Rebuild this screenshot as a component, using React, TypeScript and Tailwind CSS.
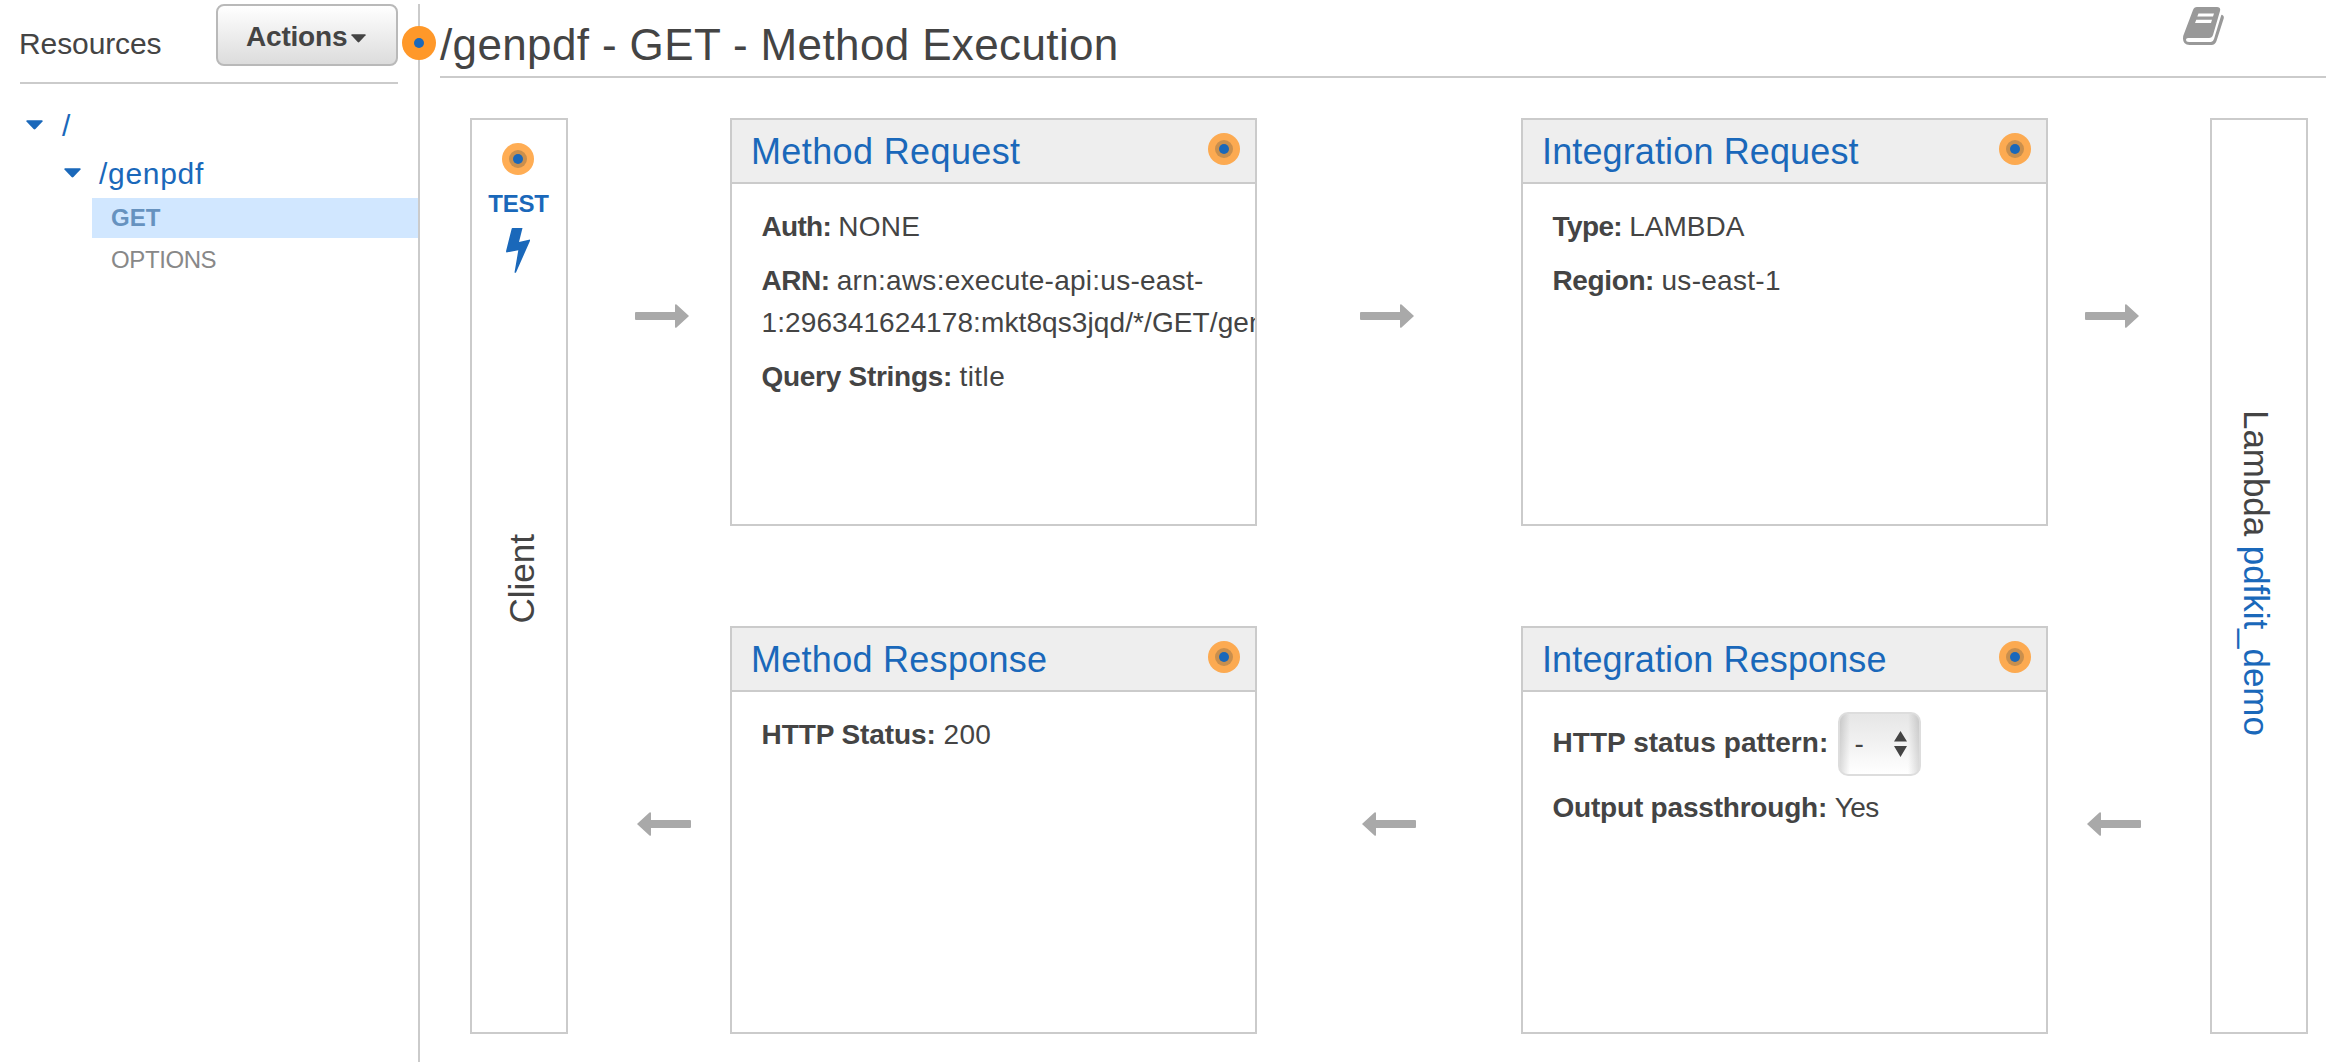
import React from "react";

function Dot({ className = "" }: { className?: string }) {
  return (
    <svg className={`size-8 shrink-0 ${className}`} viewBox="0 0 32 32">
      <circle cx="16" cy="16" r="16" fill="#ff9829" fillOpacity="0.8" />
      <circle cx="16" cy="16" r="9" fill="#c98f4d" />
      <circle cx="16" cy="16" r="5" fill="#1a68ba" />
    </svg>
  );
}

function Arrow({ left = false, className = "" }: { left?: boolean; className?: string }) {
  return (
    <div className={`pt-[186px] ${className}`}>
      <svg className={`h-6 w-[54px] ${left ? "rotate-180" : ""}`} viewBox="0 0 54 24">
        <path d="M1 8H40V1Q40.300 -0.300 41.500 0.400L53.500 11.400Q54.200 12 53.500 12.600L41.500 23.600Q40.300 24.300 40 23V16H1Q0 16 0 15V9Q0 8 1 8Z" fill="#a9a9a9" />
      </svg>
    </div>
  );
}

function Caret({ className = "" }: { className?: string }) {
  return (
    <svg className={`shrink-0 ${className}`} viewBox="0 0 18 10">
      <path d="M1 0H17Q18 0.300 17.500 1.200L10 9.300Q9 10.200 8 9.300L0.500 1.200Q0 0.300 1 0Z" fill="currentColor" />
    </svg>
  );
}

function Card({ title, titleClass, children }: { title: string; titleClass: string; children: React.ReactNode }) {
  return (
    <section className="h-[408px] w-[527px] overflow-hidden border-2 border-[#cbcbcb]">
      <header className="flex h-16 items-start justify-between border-b-2 border-[#cbcbcb] bg-[#eeeeee] pr-[15px] pl-[19px]">
        <h2 className={`text-[36px] leading-[63px] text-[#1a68ba] ${titleClass}`}>{title}</h2>
        <Dot className="mt-[13px]" />
      </header>
      <div className="flex flex-col gap-3 pt-[22px] pl-[29.500px] text-[28px] leading-[42px]">{children}</div>
    </section>
  );
}

export default function App() {
  return (
    <div className="flex h-[1062px] w-[2326px] overflow-hidden bg-white font-['Liberation_Sans',Arial,sans-serif] text-[#444444]">
      <aside className="relative mt-1 w-[420px] shrink-0 border-r-2 border-[#cbcbcb]">
        <div className="ml-5 flex h-20 w-[378px] items-start justify-between border-b-2 border-[#cbcbcb]">
          <h2 className="-ml-px pt-[20px] text-[30px] leading-[40px] tracking-[-0.1px]">Resources</h2>
          <button className="flex h-[62px] w-[182px] items-start rounded-lg border-2 border-[#b9b9b9] bg-linear-to-b from-white to-[#dcdcdc] pl-7 text-[28px] font-bold">
            <span className="leading-[62px] tracking-[-0.2px]">Actions</span>
            <Caret className="mt-[28px] ml-[4px] h-[9px] w-[15px]" />
          </button>
        </div>
        <nav>
          <div className="mt-[21px] flex h-[40px] items-center pl-[26px] text-[30px] leading-[40px] text-[#1a68ba]">
            <Caret className="h-[10px] w-[17px]" />
            <span className="ml-[19px] pt-[2px]">/</span>
          </div>
          <div className="mt-2 flex h-[40px] items-center pl-[64px] text-[30px] leading-[40px] text-[#1a68ba]">
            <Caret className="h-[10px] w-[17px]" />
            <span className="ml-[18px] pt-[2px] tracking-[0.7px]">/genpdf</span>
          </div>
          <div className="mt-[5px] ml-[92px] h-10 bg-[#d1e7ff] pl-[19px] text-[24px] leading-[39px] font-bold text-[#6692bf]">GET</div>
          <div className="ml-[92px] h-10 pl-[19px] text-[24px] leading-[43px] tracking-[-0.4px] text-[#888888]">OPTIONS</div>
        </nav>
        <svg className="absolute top-[22px] -right-[18px] size-[34px]" viewBox="0 0 34 34">
          <circle cx="17" cy="17" r="17" fill="#ff9829" />
          <circle cx="17" cy="17" r="5" fill="#1a68ba" />
        </svg>
      </aside>

      <main className="ml-5 flex flex-1 flex-col">
        <div className="flex h-[78px] justify-between border-b-2 border-[#cbcbcb]">
          <h1 className="pt-[20px] text-[44px] leading-[50px] tracking-[0.37px]">/genpdf - GET - Method Execution</h1>
          <svg className="mt-[7px] mr-[102px] h-[38px] w-[41px]" viewBox="0 0 41 38">
            <path fill="#999999" fillRule="evenodd" d="M14 0H34Q38 0 37 4L30 28Q29 31 26 31H5Q3 31 3 32.500Q3 35 6 35H28Q30 35 31 32L38 9Q38.500 7 40 8.500Q41.200 9.500 40.700 11.500L33.500 34Q32 38 28.500 38H6.500Q0 38 0 31.500Q0 28.500 1.500 25.500L10 3Q11 0 14 0ZM15.500 6.500L14.300 9.500H30L31 6.500ZM13.300 12.800L12 16H28L29 12.800Z" />
          </svg>
        </div>

        <div className="mt-10 ml-[30px] grid grid-cols-[98px_162px_527px_264px_527px_162px_98px] grid-rows-[408px_408px] gap-y-[100px]">
          <div className="row-span-2 flex flex-col items-center border-2 border-[#cbcbcb]">
            <Dot className="mt-[23px] -ml-[2px]" />
            <span className="mt-[8px] -ml-px text-[24px] leading-[42px] font-bold tracking-[-0.2px] text-[#1a68ba]">TEST</span>
            <svg className="mt-[3px] -ml-[2px] h-[45px] w-6" viewBox="0 0 24 45">
              <path d="M6.500 0H16.500L13 14L24 11.500Q24.200 12.500 23.500 14L10 44.500Q9.500 45.200 8.500 44.500L12.300 22.300L0.500 24.500Q-0.200 24 0.200 22.500L5.600 1Q5.800 0 6.500 0Z" fill="#1a68ba" />
            </svg>
            <span className="mt-[261px] ml-[6px] rotate-180 text-[35px] leading-[40px] [writing-mode:vertical-rl]">Client</span>
          </div>
          <Arrow className="pl-[67px]" />
          <Card title="Method Request" titleClass="tracking-[0.38px]">
            <p className="tracking-[0.25px]"><b className="tracking-[-0.7px]">Auth: </b>NONE</p>
            <p className="tracking-[0.26px]"><b className="tracking-[-0.5px]">ARN: </b>arn:aws:execute-api:us-east-<br /><span className="tracking-[0.1px]">1:296341624178:mkt8qs3jqd/*/GET/genpdf</span></p>
            <p className="tracking-[0.4px]"><b className="tracking-[-0.28px]">Query Strings: </b>title</p>
          </Card>
          <Arrow className="pl-[103px]" />
          <Card title="Integration Request" titleClass="tracking-[0.13px]">
            <p><b className="tracking-[-0.6px]">Type: </b>LAMBDA</p>
            <p className="tracking-[0.3px]"><b className="tracking-[-0.38px]">Region: </b>us-east-1</p>
          </Card>
          <Arrow className="pl-[37px]" />
          <div className="row-span-2 flex items-start justify-center border-2 border-[#cbcbcb]">
            <span className="mt-[290px] mr-[7px] text-[35px] leading-[40px] tracking-[-0.06px] whitespace-nowrap [writing-mode:vertical-rl]">
              Lambda <a className="text-[#1a68ba]">pdfkit_demo</a>
            </span>
          </div>

          <Arrow left className="pl-[69px]" />
          <Card title="Method Response" titleClass="tracking-[0.28px]">
            <p className="tracking-[0.3px]"><b className="tracking-[-0.08px]">HTTP Status: </b>200</p>
          </Card>
          <Arrow left className="pl-[105px]" />
          <Card title="Integration Response" titleClass="tracking-[0.12px]">
            <div className="-mt-[2px] -mb-px flex h-16 items-start">
              <b className="w-[285px] pt-[10px] tracking-[0.05px]">HTTP status pattern:</b>
              <div className="flex h-16 w-[83px] items-center justify-between rounded-[10px] border-2 border-[#dddddd] bg-[linear-gradient(to_right,#0002,#0000_10px,#0000_68px,#0002),linear-gradient(to_bottom,#e6e6e6,#f2f2f2_50%,#ffffff)] pr-[12px] pl-[15px]">
                <span>-</span>
                <svg className="h-[26px] w-[13px]" viewBox="0 0 13 26">
                  <path d="M6.500 0L13 10.500H0ZM0 15H13L6.500 26Z" fill="#444444" />
                </svg>
              </div>
            </div>
            <p className="tracking-[-0.5px]"><b className="tracking-[-0.2px]">Output passthrough: </b>Yes</p>
          </Card>
          <Arrow left className="pl-[39px]" />
        </div>
      </main>
    </div>
  );
}
